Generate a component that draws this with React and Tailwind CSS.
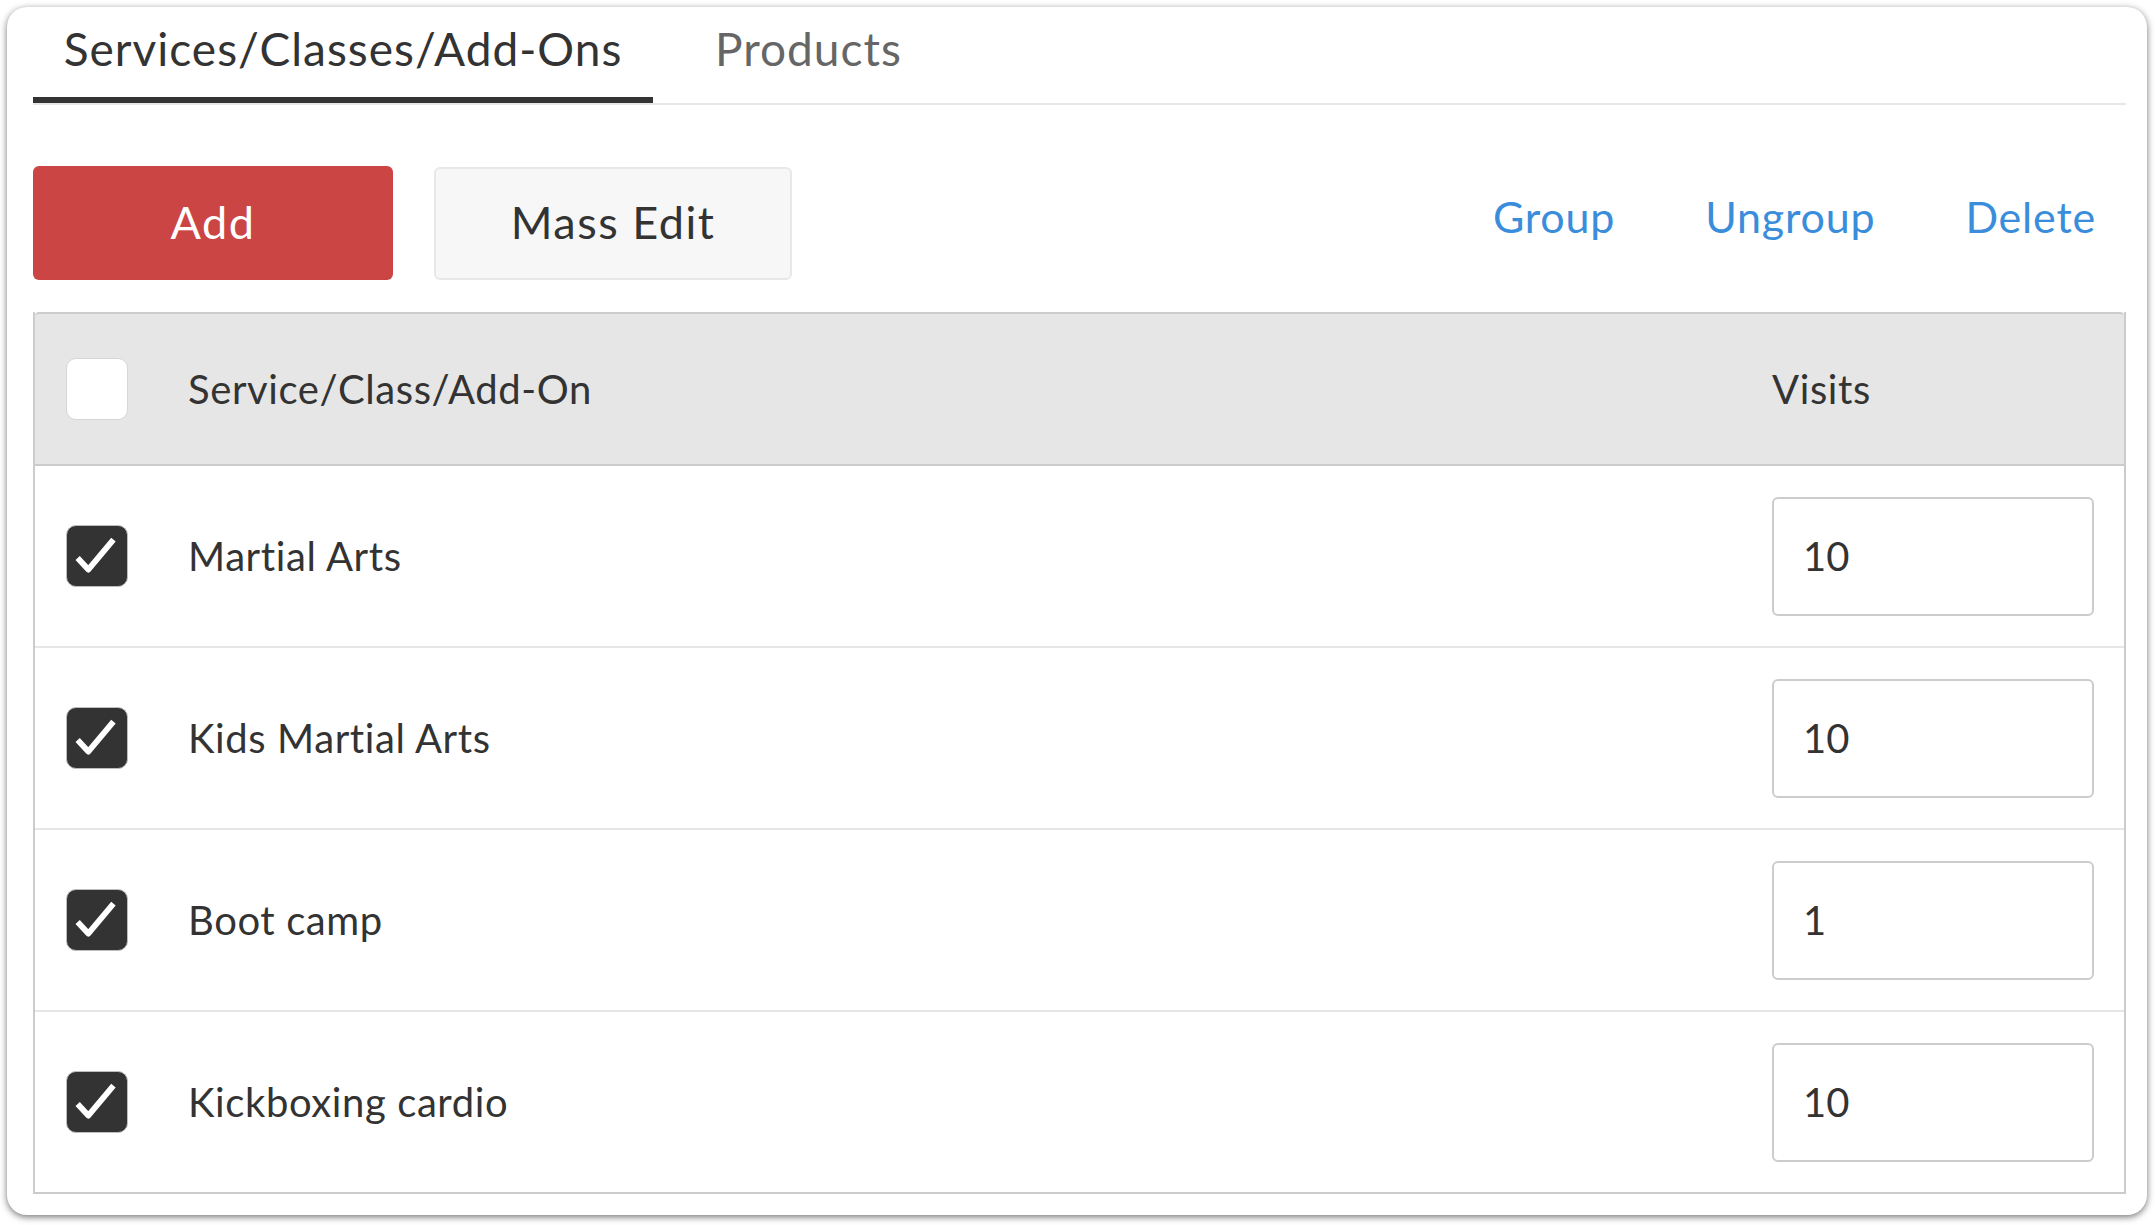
import React from "react";

const rows = [
  { name: "Martial Arts", visits: "10" },
  { name: "Kids Martial Arts", visits: "10" },
  { name: "Boot camp", visits: "1" },
  { name: "Kickboxing cardio", visits: "10" },
];

function Check({ checked }) {
  if (!checked) {
    return <div className="h-[62px] w-[62px] shrink-0 rounded-[10px] border border-[#d6d6d6] bg-white" />;
  }
  return (
    <div className="flex h-[62px] w-[62px] shrink-0 items-center justify-center rounded-[10px] border border-[#bdbdbd] bg-[#333333]">
      <svg width="62" height="62" viewBox="0 0 62 62" fill="none">
        <polyline points="11,33 22,45 48,14" stroke="#ffffff" strokeWidth="6" strokeLinejoin="round" />
      </svg>
    </div>
  );
}

export default function App() {
  return (
    <div className="min-h-screen bg-white pl-[7px] pt-[7px] font-['Lato','Liberation_Sans',sans-serif] text-[#333333]">
      <div className="h-[1208px] w-[2140px] rounded-[20px] bg-white pl-[26px] pr-[21px] shadow-[0_2px_7px_rgba(0,0,0,0.55)]">
        {/* tabs */}
        <div className="flex h-[98px] border-b-2 border-[#e6e6e6]">
          <div className="flex h-[96px] w-[620px] justify-center border-b-[6px] border-[#333333] pt-[14px] text-[46px] leading-[56px] tracking-[1px]">
            Services/Classes/Add-Ons
          </div>
          <div className="ml-[30px] px-[32px] pt-[14px] text-[46px] leading-[56px] tracking-[1px] text-[#666666]">
            Products
          </div>
        </div>

        {/* toolbar */}
        <div className="mt-[61px] flex items-center">
          <button className="h-[114px] w-[360px] rounded-[6px] bg-[#cc4545] text-[45px] tracking-[1.5px] text-white">
            Add
          </button>
          <button className="ml-[41px] h-[113px] w-[358px] rounded-[6px] border-2 border-[#e8e8e8] bg-[#f7f7f7] text-[45px] tracking-[1.5px] text-[#333333]">
            Mass Edit
          </button>
          <div className="mb-[12px] ml-auto mr-[30px] flex gap-[90px] text-[43px] tracking-[0.8px] text-[#3a8ddb]">
            <a>Group</a>
            <a>Ungroup</a>
            <a>Delete</a>
          </div>
        </div>

        {/* table */}
        <div className="mt-[32px] border-x-2 border-[#cccccc]">
          <div className="flex h-[154px] items-center rounded-t-[4px] border-y-2 border-[#cccccc] bg-[#e6e6e6] pl-[31px] text-[40px] tracking-[0.6px]">
            <Check checked={false} />
            <div className="ml-[60px] flex-1">Service/Class/Add-On</div>
            <div className="mr-[30px] w-[322px]">Visits</div>
          </div>
          {rows.map((r, i) => (
            <div
              key={r.name}
              className={
                "flex h-[182px] items-center border-b-2 pl-[31px] text-[40px] tracking-[0.6px] " +
                (i === rows.length - 1 ? "border-[#cccccc]" : "border-[#e6e6e6]")
              }
            >
              <Check checked />
              <div className="ml-[60px] flex-1">{r.name}</div>
              <div className="mr-[30px] flex h-[119px] w-[322px] items-center rounded-[6px] border-2 border-[#cccccc] pl-[29px] tracking-normal">
                {r.visits}
              </div>
            </div>
          ))}
        </div>
      </div>
    </div>
  );
}
